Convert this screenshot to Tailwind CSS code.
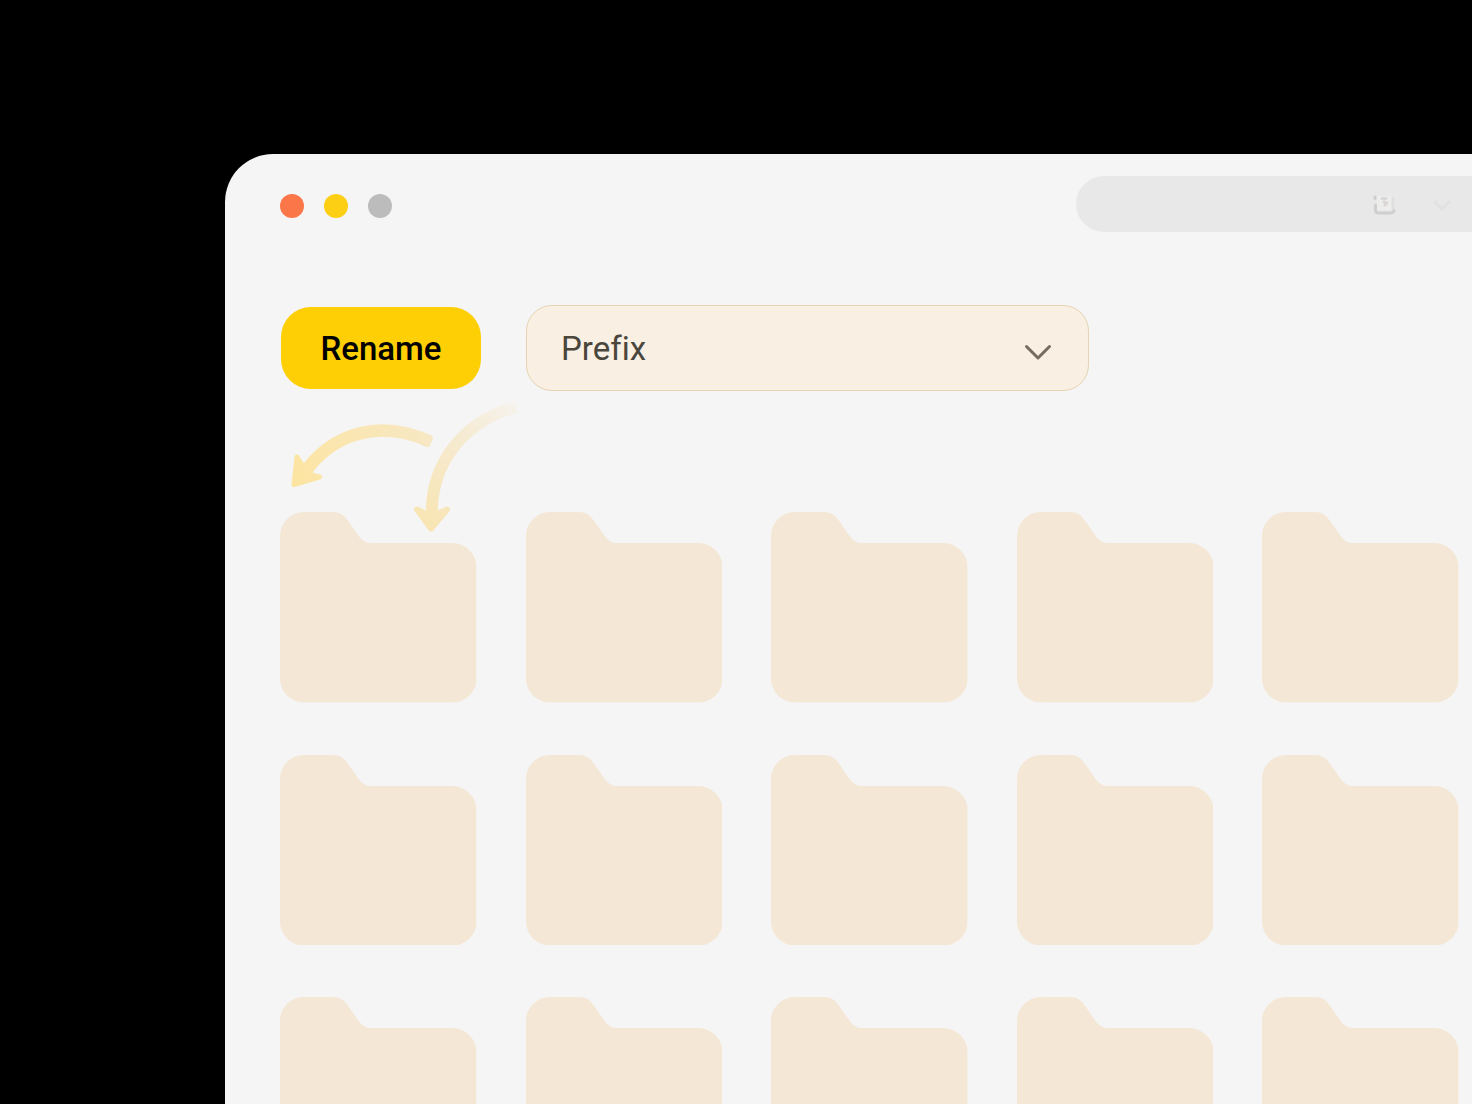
<!DOCTYPE html>
<html lang="en">
  <head>
    <meta charset="UTF-8" />
    <meta name="viewport" content="width=device-width, initial-scale=1.0" />
    <title>Batch Rename</title>
    <script src="https://cdn.jsdelivr.net/npm/@tailwindcss/browser@4"></script>
  </head>
  <body class="bg-black font-['Roboto',sans-serif]">
    <!-- Folder shape shared by the whole grid -->
    <svg class="hidden" aria-hidden="true">
      <symbol id="folder" viewBox="0 0 196 190">
        <path
          d="M24 0H52C60 0 64 3 68 9L77 22C81 28 85 31 91 31H172A24 24 0 0 1 196 55V166A24 24 0 0 1 172 190H24A24 24 0 0 1 0 166V24A24 24 0 0 1 24 0Z"
        />
      </symbol>
    </svg>

    <div class="h-screen overflow-hidden pt-[154px] pl-[225px]">
      <!-- Window -->
      <div class="min-h-full rounded-tl-[48px] bg-[#f5f5f5] pt-[22px]">
        <!-- Title bar -->
        <header class="flex h-[60px] items-center justify-between pl-[55px]">
          <div class="flex gap-5">
            <button aria-label="Close" class="size-6 rounded-full bg-[#fb774a]"></button>
            <button aria-label="Minimize" class="size-6 rounded-full bg-[#fccf14]"></button>
            <button aria-label="Zoom" class="size-6 rounded-full bg-[#bdbcbc]"></button>
          </div>
          <div
            class="flex h-14 w-[396px] items-center gap-9 self-start rounded-l-full bg-[#e8e8e8] pr-5 pl-7"
          >
            <input
              type="text"
              aria-label="Location"
              class="h-full min-w-0 flex-1 bg-transparent text-xl outline-none"
            />
            <button aria-label="Views">
              <svg class="size-6" viewBox="0 0 24 24" fill="none" stroke-linecap="round" stroke-linejoin="round">
                <rect x="5" y="4" width="14" height="14" fill="#ededec" />
                <path d="M3.500 13V18Q3.500 21 6.500 21H18.500Q21.500 21 22 18.500" stroke="#d0cece" stroke-width="3" />
                <path d="M3 5V6.500" stroke="#cfcdcd" stroke-width="3" />
                <path d="M21 6V16" stroke="#dfdede" stroke-width="2.500" />
                <path d="M10 6.500H14M12 10L15 11L13 13" stroke="#dbd6d6" stroke-width="3" />
              </svg>
            </button>
            <button aria-label="More">
              <svg class="size-5" viewBox="0 0 20 20" fill="none" stroke="#e1e1e0" stroke-width="3" stroke-linecap="round" stroke-linejoin="round">
                <path d="M3 8L10 15L17 8" />
              </svg>
            </button>
          </div>
        </header>

        <!-- Toolbar -->
        <div class="relative mt-[69px] flex items-center gap-[45px] pl-14">
          <button class="h-[82px] w-[200px] rounded-[30px] bg-[#fdcf04] pt-0.5 text-[33px] font-medium text-black">
            Rename
          </button>
          <div class="relative w-[563px]">
            <select
              aria-label="Rename mode"
              class="h-[86px] w-full appearance-none rounded-[26px] border border-[#e6d3b2] bg-[#f9efe3] px-[34px] pt-0.5 text-[33px] text-[#4a463c] [font-variant-ligatures:none]"
            >
              <option>Prefix</option>
              <option>Suffix</option>
            </select>
            <svg
              class="pointer-events-none absolute top-8 right-8 h-8 w-9"
              viewBox="0 0 36 32" fill="none" stroke="#766c60" stroke-width="3" stroke-linecap="round" stroke-linejoin="round"
            >
              <path d="M5.500 9.500L17 21L28.500 9.500" />
            </svg>
          </div>

          <!-- Hint arrows -->
          <svg class="pointer-events-none absolute top-[90px] left-[55px] h-[145px] w-[250px]" viewBox="0 0 250 145" fill="none" aria-hidden="true">
            <defs>
              <linearGradient id="fade-left" gradientUnits="userSpaceOnUse" x1="10" y1="90" x2="154" y2="40">
                <stop stop-color="#fce4a0" />
                <stop offset="1" stop-color="#f7e8c5" />
              </linearGradient>
              <linearGradient id="fade-down" gradientUnits="userSpaceOnUse" x1="151" y1="137" x2="238" y2="10">
                <stop stop-color="#f8e5b2" />
                <stop offset="0.600" stop-color="#f6ead0" />
                <stop offset="1" stop-color="#f6f3ed" />
              </linearGradient>
            </defs>
            <g stroke="url(#fade-left)">
              <path d="M149.500 46.500C103 25 53 35 23 80" stroke-width="12.500" />
              <path d="M151 43L148 50" stroke-width="4" stroke-linecap="round" />
              <path d="M17 62L24 73L30 79.500L39.500 82L14 89.500Z" fill="url(#fade-left)" stroke-width="5" stroke-linejoin="round" />
            </g>
            <g stroke="url(#fade-down)">
              <path d="M236 12C187 25 149 66 152 124" stroke-width="12" />
              <path d="M137 114.500L147 119.500H156L167 114.500L151 133.500Z" fill="url(#fade-down)" stroke-width="6" stroke-linejoin="round" />
            </g>
          </svg>
        </div>

        <!-- Folders -->
        <main id="folders" class="mt-[121px] grid grid-cols-5 gap-x-[49px] gap-y-[52px] pr-[13px] pl-[55px]"></main>
      </div>
    </div>

    <script>
      const grid = document.getElementById("folders");
      for (let i = 0; i < 15; i++) {
        grid.insertAdjacentHTML(
          "beforeend",
          '<svg class="block aspect-[196/190] w-full fill-[#f4e7d6]" role="img" aria-label="Folder"><use href="#folder" /></svg>'
        );
      }
    </script>
  </body>
</html>
